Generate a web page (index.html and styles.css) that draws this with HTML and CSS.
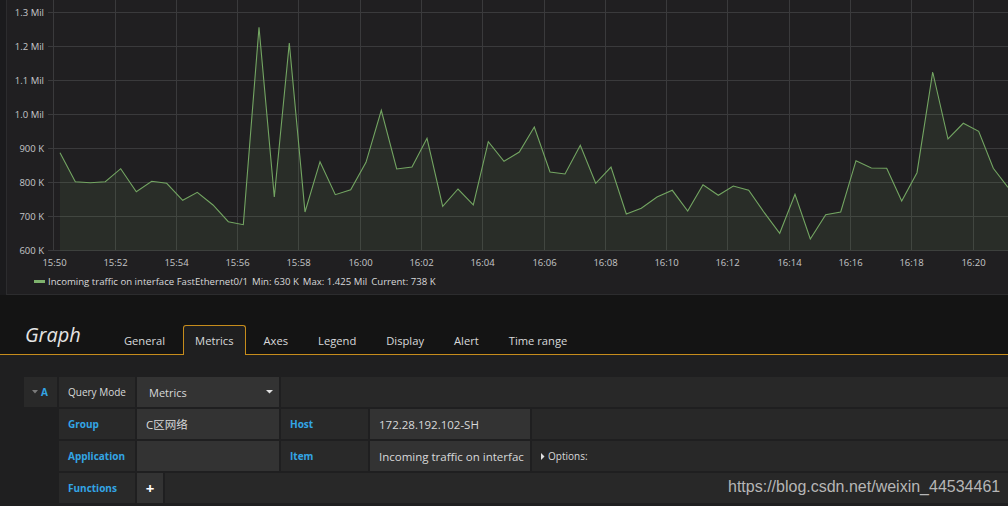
FILE: index.html
```html
<!DOCTYPE html>
<html>
<head>
<meta charset="utf-8">
<title>Graph</title>
<link rel="stylesheet" href="styles.css">
</head>
<body>
<div class="dash">
  <div class="panel">
    <svg class="chart" width="1001" height="270" viewBox="7 0 1001 270">
      <g class="grid">
        <line x1="48" y1="12.5" x2="1008" y2="12.5"/>
        <line x1="48" y1="46.5" x2="1008" y2="46.5"/>
        <line x1="48" y1="80.5" x2="1008" y2="80.5"/>
        <line x1="48" y1="114.5" x2="1008" y2="114.5"/>
        <line x1="48" y1="148.5" x2="1008" y2="148.5"/>
        <line x1="48" y1="182.5" x2="1008" y2="182.5"/>
        <line x1="48" y1="216.5" x2="1008" y2="216.5"/>
        <line x1="48" y1="250.5" x2="1008" y2="250.5"/>
        <line x1="53.5" y1="0" x2="53.5" y2="251"/>
        <line x1="115.5" y1="0" x2="115.5" y2="251"/>
        <line x1="176.5" y1="0" x2="176.5" y2="251"/>
        <line x1="237.5" y1="0" x2="237.5" y2="251"/>
        <line x1="298.5" y1="0" x2="298.5" y2="251"/>
        <line x1="360.5" y1="0" x2="360.5" y2="251"/>
        <line x1="421.5" y1="0" x2="421.5" y2="251"/>
        <line x1="482.5" y1="0" x2="482.5" y2="251"/>
        <line x1="544.5" y1="0" x2="544.5" y2="251"/>
        <line x1="605.5" y1="0" x2="605.5" y2="251"/>
        <line x1="666.5" y1="0" x2="666.5" y2="251"/>
        <line x1="727.5" y1="0" x2="727.5" y2="251"/>
        <line x1="789.5" y1="0" x2="789.5" y2="251"/>
        <line x1="850.5" y1="0" x2="850.5" y2="251"/>
        <line x1="911.5" y1="0" x2="911.5" y2="251"/>
        <line x1="973.5" y1="0" x2="973.5" y2="251"/>
      </g>
      <path class="area" d="M60,250.5 L60,152.7 L75.3,181.7 L90.3,182.7 L105.3,181.7 L120.7,168.7 L136.3,191.7 L151.7,181.3 L166.7,183.3 L182.7,200.3 L197.3,192.3 L213,205 L228.3,221.7 L243.3,224.7 L259,27.3 L274.3,197 L289.3,43 L305,212 L320,161.7 L335.3,194.7 L350.7,189.7 L366,162.3 L381.3,110.3 L396.7,169 L412,167 L427,138.3 L442.7,206.3 L458,189 L473.3,205 L488.3,141.7 L504,161.3 L519.3,152 L534.3,127 L550,172 L565,174 L580.3,145.3 L595.7,183.3 L611,167 L626.3,214 L641.3,208.3 L657,197 L672.3,190.3 L687.7,211 L703,184.7 L718.3,195.3 L733.3,186 L748.7,190.3 L764.3,212.7 L779.7,233.3 L795,194.3 L810.3,239 L825.7,214.7 L840.7,212 L856,160.7 L871.3,168 L886.7,168.3 L901.7,201 L917,172.7 L932.7,72 L948,139 L963.3,123.3 L978.7,131.3 L993.3,168.3 L1008,187.3 L1008,250.5 Z"/>
      <polyline class="line" points="60,152.7 75.3,181.7 90.3,182.7 105.3,181.7 120.7,168.7 136.3,191.7 151.7,181.3 166.7,183.3 182.7,200.3 197.3,192.3 213,205 228.3,221.7 243.3,224.7 259,27.3 274.3,197 289.3,43 305,212 320,161.7 335.3,194.7 350.7,189.7 366,162.3 381.3,110.3 396.7,169 412,167 427,138.3 442.7,206.3 458,189 473.3,205 488.3,141.7 504,161.3 519.3,152 534.3,127 550,172 565,174 580.3,145.3 595.7,183.3 611,167 626.3,214 641.3,208.3 657,197 672.3,190.3 687.7,211 703,184.7 718.3,195.3 733.3,186 748.7,190.3 764.3,212.7 779.7,233.3 795,194.3 810.3,239 825.7,214.7 840.7,212 856,160.7 871.3,168 886.7,168.3 901.7,201 917,172.7 932.7,72 948,139 963.3,123.3 978.7,131.3 993.3,168.3 1008,187.3"/>
      <g class="ylabels">
        <text x="44" y="16">1.3 Mil</text>
        <text x="44" y="50">1.2 Mil</text>
        <text x="44" y="84">1.1 Mil</text>
        <text x="44" y="118">1.0 Mil</text>
        <text x="44" y="152">900 K</text>
        <text x="44" y="186">800 K</text>
        <text x="44" y="220">700 K</text>
        <text x="44" y="254">600 K</text>
      </g>
      <g class="xlabels">
        <text x="54.5" y="265.5">15:50</text>
        <text x="115.5" y="265.5">15:52</text>
        <text x="176.5" y="265.5">15:54</text>
        <text x="237.5" y="265.5">15:56</text>
        <text x="298.5" y="265.5">15:58</text>
        <text x="360.5" y="265.5">16:00</text>
        <text x="421.5" y="265.5">16:02</text>
        <text x="482.5" y="265.5">16:04</text>
        <text x="544.5" y="265.5">16:06</text>
        <text x="605.5" y="265.5">16:08</text>
        <text x="666.5" y="265.5">16:10</text>
        <text x="727.5" y="265.5">16:12</text>
        <text x="789.5" y="265.5">16:14</text>
        <text x="850.5" y="265.5">16:16</text>
        <text x="911.5" y="265.5">16:18</text>
        <text x="973.5" y="265.5">16:20</text>
      </g>
    </svg>
    <div class="legend">
      <span class="swatch"></span>
      <span class="legend-name">Incoming traffic on interface FastEthernet0/1</span>
      <span class="legend-val">Min: 630 K</span>
      <span class="legend-val">Max: 1.425 Mil</span>
      <span class="legend-val">Current: 738 K</span>
    </div>
  </div>
</div>

<div class="editor">
  <div class="edit-header">
    <h2 class="edit-title">Graph</h2>
    <ul class="tabs">
      <li class="tab">General</li>
      <li class="tab active">Metrics</li>
      <li class="tab">Axes</li>
      <li class="tab">Legend</li>
      <li class="tab">Display</li>
      <li class="tab">Alert</li>
      <li class="tab">Time range</li>
    </ul>
  </div>

  <div class="edit-body">
    <div class="qrow">
      <div class="cell qname">
        <svg class="qcaret" width="6" height="4" viewBox="0 0 6 4"><path d="M0 0 L6 0 L3 3.5 Z"/></svg>
        <span>A</span>
      </div>
      <div class="cell label plain">Query Mode</div>
      <div class="cell select">
        <span>Metrics</span>
        <svg class="selcaret" width="7" height="4" viewBox="0 0 7 4"><path d="M0 0 L7 0 L3.5 3.5 Z"/></svg>
      </div>
      <div class="cell filler"></div>
    </div>

    <div class="qrow">
      <div class="cell spacer"></div>
      <div class="cell label">Group</div>
      <div class="cell input">C区网络</div>
      <div class="cell label2">Host</div>
      <div class="cell input2">172.28.192.102-SH</div>
      <div class="cell filler"></div>
    </div>

    <div class="qrow">
      <div class="cell spacer"></div>
      <div class="cell label">Application</div>
      <div class="cell input"></div>
      <div class="cell label2">Item</div>
      <div class="cell input2">Incoming traffic on interfac</div>
      <div class="cell filler options">
        <svg class="optcaret" width="4" height="7" viewBox="0 0 4 7"><path d="M0 0 L3.5 3.5 L0 7 Z"/></svg>
        <span>Options:</span>
      </div>
    </div>

    <div class="qrow">
      <div class="cell spacer"></div>
      <div class="cell label">Functions</div>
      <div class="cell plus">+</div>
      <div class="cell filler"></div>
    </div>
  </div>
</div>

<div class="watermark">https://blog.csdn.net/weixin_44534461</div>
</body>
</html>
```

FILE: styles.css
```css
* {
  box-sizing: border-box;
}

body {
  margin: 0;
  width: 1008px;
  height: 506px;
  overflow: hidden;
  position: relative;
  background: #141414;
  font-family: "Open Sans", "Noto Sans CJK SC", sans-serif;
  color: #d8d9da;
}

/* ---------- dashboard panel ---------- */
.dash {
  height: 295px;
  padding-left: 6px;
  background: #1b1b1d;
}

.panel {
  height: 295px;
  background: #201f21;
  border-left: 1px solid #2c2c2e;
  border-bottom: 1px solid #2c2c2e;
}

.chart {
  display: block;
}

.grid line {
  stroke: #3a3a3c;
  stroke-width: 1;
}

.area {
  fill: rgba(126, 178, 109, 0.1);
  stroke: none;
}

.line {
  fill: none;
  stroke: #73a562;
  stroke-width: 1.1;
  stroke-linejoin: miter;
}

.ylabels text {
  font-family: "Open Sans", sans-serif;
  font-size: 9.5px;
  fill: #c6c7c9;
  text-anchor: end;
}

.xlabels text {
  font-family: "Open Sans", sans-serif;
  font-size: 9.5px;
  fill: #c6c7c9;
  text-anchor: middle;
}

.legend {
  height: 23px;
  display: flex;
  align-items: center;
  padding-left: 27px;
  font-size: 9.6px;
  color: #d8d9da;
  white-space: nowrap;
}

.swatch {
  width: 11px;
  height: 3px;
  background: #7eb26d;
  margin-right: 3px;
}

.legend-val {
  margin-left: 4px;
}

/* ---------- editor ---------- */
.editor {
  height: 211px;
  background: #1f1f20;
}

.edit-header {
  height: 60px;
  display: flex;
  align-items: flex-end;
  background: #141414;
  border-bottom: 1px solid #c68c1c;
  padding-left: 25px;
}

.edit-title {
  margin: 0 31px 7px 0;
  font-size: 20px;
  line-height: 24px;
  font-style: italic;
  font-weight: 400;
  color: #e4e4e4;
}

.tabs {
  display: flex;
  margin: 0;
  padding: 0;
  list-style: none;
}

.tab {
  height: 30px;
  line-height: 29px;
  padding: 0 11px;
  margin-right: 6px;
  font-size: 11.2px;
  color: #d8d9da;
  border: 1px solid transparent;
  border-bottom: none;
  border-radius: 3px 3px 0 0;
  margin-bottom: -1px;
}

.tab.active {
  background: #1f1f20;
  border-color: #c68c1c;
}

.edit-body {
  padding: 22px 0 0 24px;
  display: flex;
  flex-direction: column;
  gap: 2px;
}

.qrow {
  display: flex;
  gap: 2px;
  height: 30px;
}

.cell {
  display: flex;
  align-items: center;
  white-space: nowrap;
  overflow: hidden;
}

.qname {
  width: 33px;
  background: #292929;
  padding-left: 8px;
  font-size: 10px;
  font-weight: 700;
  color: #33a5e5;
}

.qcaret {
  fill: #7a7a7a;
  margin-right: 3px;
}

.spacer {
  width: 33px;
}

.label {
  width: 76px;
  background: #292929;
  padding-left: 9px;
  font-size: 10px;
  font-weight: 700;
  color: #33a5e5;
}

.label.plain {
  font-weight: 400;
  color: #d8d9da;
}

.select {
  width: 142px;
  background: #333333;
  padding: 0 6px 0 12px;
  font-size: 11px;
  color: #d8d9da;
  justify-content: space-between;
}

.selcaret {
  fill: #e0e0e0;
}

.input {
  width: 142px;
  background: #333333;
  padding-left: 9px;
  font-size: 11.5px;
  color: #d8d9da;
}

.label2 {
  width: 87px;
  background: #292929;
  padding-left: 9px;
  font-size: 10px;
  font-weight: 700;
  color: #33a5e5;
}

.input2 {
  width: 160px;
  background: #333333;
  padding-left: 9px;
  font-size: 11.5px;
  color: #d8d9da;
}

.filler {
  flex: 1;
  background: #282828;
}

.options {
  padding-left: 9px;
  font-size: 10px;
  color: #d8d9da;
}

.optcaret {
  fill: #e0e0e0;
  margin-right: 3px;
}

.plus {
  width: 26px;
  background: #333333;
  justify-content: center;
  font-size: 15px;
  font-weight: 700;
  color: #ffffff;
}

.watermark {
  position: absolute;
  left: 728px;
  top: 478px;
  font-family: "Liberation Sans", Arial, sans-serif;
  font-size: 16px;
  line-height: 18px;
  color: #b6b6b6;
}
```
